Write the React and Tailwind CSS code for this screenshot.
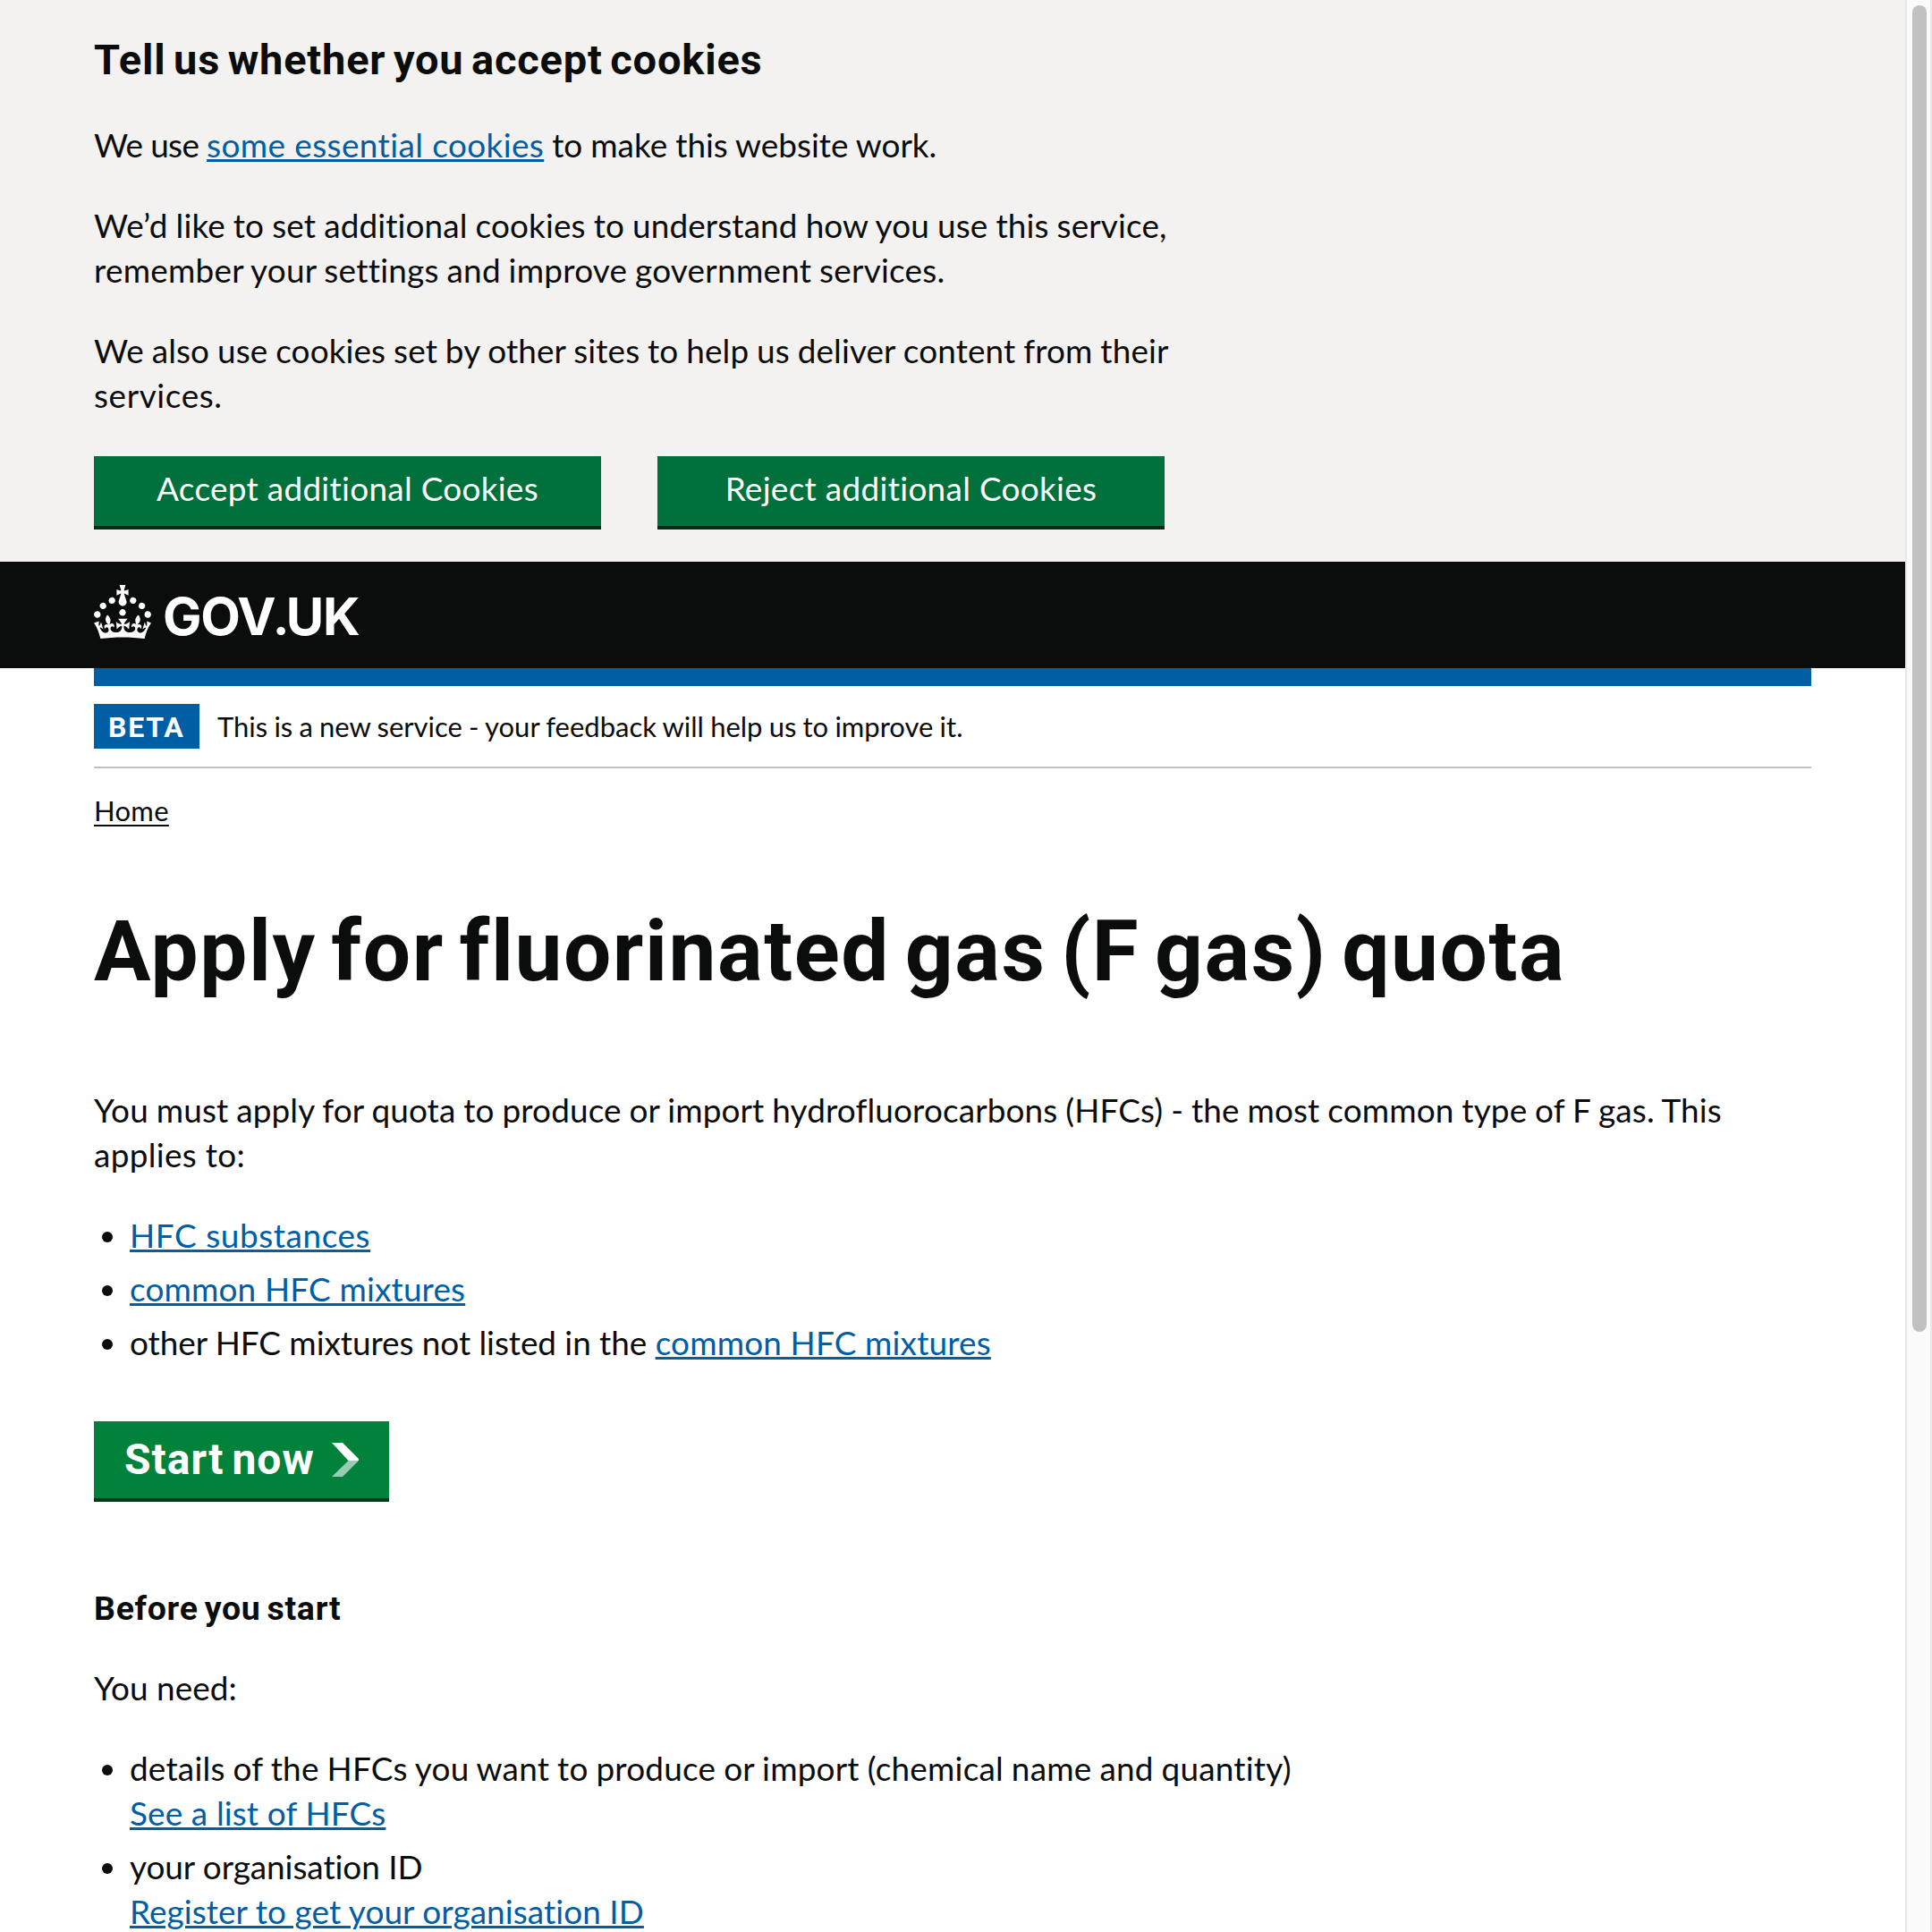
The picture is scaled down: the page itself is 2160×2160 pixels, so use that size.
import React from "react";

const linkClass =
  "text-[#005ea5] underline decoration-[3px] underline-offset-[2px]";

function Crown() {
  return (
    <svg className="h-[60px] w-16 shrink-0" viewBox="0 0 32 30" fill="currentColor" aria-hidden="true">
      <path
        fillRule="evenodd"
        clipRule="evenodd"
        d="M22.6 10.4c-1 .4-2-.1-2.4-1-.4-.9.1-2 1-2.4.9-.4 2 .1 2.4 1s-.1 2-1 2.4m-5.9 6.7c-.9.4-2-.1-2.4-1-.4-.9.1-2 1-2.4.9-.4 2 .1 2.4 1s-.1 2-1 2.4m10.8-3.7c-1 .4-2-.1-2.4-1-.4-.9.1-2 1-2.4.9-.4 2 .1 2.4 1s0 2-1 2.4m3.3 4.8c-1 .4-2-.1-2.4-1-.4-.9.1-2 1-2.4.9-.4 2 .1 2.4 1s-.1 2-1 2.4M17 4.7l2.3 1.2V2.5l-2.3.7-.2-.2.9-3h-3.4l.9 3-.2.2c-.1.1-2.3-.7-2.3-.7v3.4L15 4.7c.1.1.1.2.2.2l-1.3 4c-.1.2-.1.4-.1.6 0 1.1.8 2 1.9 2.2h.7c1-.2 1.9-1.1 1.9-2.1 0-.2 0-.4-.1-.6l-1.3-4c-.1-.2 0-.2.1-.3m-7.6 5.7c.9.4 2-.1 2.4-1 .4-.9-.1-2-1-2.4-.9-.4-2 .1-2.4 1s0 2 1 2.4m-5 3c.9.4 2-.1 2.4-1 .4-.9-.1-2-1-2.4-.9-.4-2 .1-2.4 1s.1 2 1 2.4m-3.2 4.8c.9.4 2-.1 2.4-1 .4-.9-.1-2-1-2.4-.9-.4-2 .1-2.4 1s0 2 1 2.4m14.8 11c4.4 0 8.6.3 12.3.8 1.1-4.5 2.4-7 3.7-8.8l-2.5-.9c.2 1.3.3 1.9 0 2.7-.4-.4-.8-1.1-1.1-2.3l-1.2 4c.7-.5 1.3-.8 2-.9-1.1 2.5-2.6 3.1-3.5 3-1.1-.2-1.7-1.2-1.5-2.1.3-1.2 1.5-1.5 2.1-.1 1.1-2.3-.8-3-2-2.3 1.9-1.9 2.1-3.5.6-5.6-2.1 1.6-2.1 3.2-1.2 5.5-1.2-1.4-3.2-.6-2.5 1.6.9-1.4 2.1-.5 1.9.8-.2 1.1-1.7 2.1-3.5 1.9-2.7-.2-2.9-2.1-2.9-3.6.7-.1 1.9.5 2.9 1.9l.4-4.3c-1.1 1.1-2.1 1.4-3.2 1.4.4-1.2 2.1-3 2.1-3h-5.4s1.7 1.9 2.1 3c-1.1 0-2.1-.2-3.2-1.4l.4 4.3c1-1.4 2.2-2 2.9-1.9-.1 1.5-.2 3.4-2.9 3.6-1.9.2-3.4-.8-3.5-1.9-.2-1.3 1-2.2 1.9-.8.7-2.3-1.2-3-2.5-1.6.9-2.2.9-3.9-1.2-5.5-1.5 2-1.3 3.7.6 5.6-1.2-.7-3.1 0-2 2.3.6-1.4 1.8-1.1 2.1.1.2.9-.3 1.9-1.5 2.1-.9.2-2.4-.5-3.5-3 .6 0 1.2.3 2 .9l-1.2-4c-.3 1.1-.7 1.9-1.1 2.3-.3-.8-.2-1.4 0-2.7l-2.9.9C1.3 23 2.6 25.5 3.7 30c3.7-.5 7.9-.8 12.3-.8"
      />
    </svg>
  );
}

function Item({ children }) {
  return (
    <li className="flex">
      <span className="mt-[21px] mr-[19px] ml-[9px] size-3 shrink-0 rounded-full bg-[#0b0c0c]" />
      <div>{children}</div>
    </li>
  );
}

function CookieBanner() {
  return (
    <section className="h-[628px] bg-[#f3f2f1] px-[105px] pt-[37px]">
      <h2 className="font-['Roboto',sans-serif] text-[47px] leading-[60px] font-bold tracking-[0.8px] [word-spacing:-3.9px]">
        Tell us whether you accept cookies
      </h2>
      <p className="mt-10">
        <span className="tracking-[-0.63px]">We use </span>
        <a className={`${linkClass} tracking-[0.41px]`}>some essential cookies</a>
        <span className="tracking-[0.02px] [word-spacing:-0.5px]"> to make this website work.</span>
      </p>
      <p className="mt-10">
        <span className="tracking-[0.12px] [word-spacing:-0.5px]">
          We’d like to set additional cookies to understand how you use this service,
        </span>
        <br />
        <span className="tracking-[0.26px] [word-spacing:-1px]">remember your settings and improve government services.</span>
      </p>
      <p className="mt-10">
        <span className="tracking-[0.12px] [word-spacing:-0.7px]">
          We also use cookies set by other sites to help us deliver content from their
        </span>
        <br />
        <span className="tracking-[0.6px]">services.</span>
      </p>
      <div className="mt-[43px] flex gap-[63px] text-center text-white">
        <button className="h-[82px] w-[567px] border-b-4 border-[#002d18] bg-[#00703c] pb-1.5 tracking-[0.3px]">
          Accept additional Cookies
        </button>
        <button className="h-[82px] w-[567px] border-b-4 border-[#002d18] bg-[#00703c] pb-1.5 tracking-[0.32px]">
          Reject additional Cookies
        </button>
      </div>
    </section>
  );
}

function Scrollbar() {
  return (
    <div className="h-full w-[30px] shrink-0 border-x-2 border-[#e8e8e8] bg-[#fafafa] pt-1.5 pl-1.5">
      <div className="h-[1483px] w-4 rounded-full bg-[#c1c1c1]" />
    </div>
  );
}

export default function App() {
  return (
    <div className="flex h-[2160px] w-[2160px] overflow-hidden bg-white font-['Lato',sans-serif] text-[36.9px] leading-[50px] whitespace-nowrap text-[#0b0c0c] [font-variant-ligatures:none]">
      <div className="h-full flex-1 overflow-hidden">
        <CookieBanner />

        <header className="flex h-[119px] bg-[#0b0c0c] px-[105px] pt-[26px] text-white">
          <Crown />
          <span className="ml-[13px] font-['Inter',sans-serif] text-[58px] leading-[68px] font-bold tracking-[-1.3px]">
            GOV<span className="font-['Lato',sans-serif] font-black">.</span>UK
          </span>
        </header>

        <div className="px-[105px]">
          <div className="h-5 bg-[#005ea5]" />
          <div className="mt-5 flex h-[72px] border-b-2 border-[#bfc1c3] text-[31px]">
            <strong className="h-[50px] w-[118px] bg-[#005ea5] pl-4 font-['Roboto',sans-serif] text-[32px] leading-[52px] font-bold tracking-[1.8px] text-white">
              BETA
            </strong>
            <span className="ml-5 tracking-[-0.01px] [word-spacing:-0.7px]">
              This is a new service - your feedback will help us to improve it.
            </span>
          </div>
          <nav className="mt-[27px] text-[31px] leading-10">
            <a className="tracking-[0.3px] underline decoration-2 underline-offset-[4px]">Home</a>
          </nav>

          <h1 className="mt-[88px] font-['Roboto',sans-serif] text-[94.5px] leading-[100px] font-bold tracking-[1.55px] [word-spacing:-8.3px]">
            Apply for fluorinated gas (F gas) quota
          </h1>

          <p className="mt-[102px]">
            <span className="tracking-[0.13px] [word-spacing:-0.7px]">
              You must apply for quota to produce or import hydrofluorocarbons (HFCs) - the most common type of F gas. This
            </span>
            <br />
            <span className="tracking-[0.34px]">applies to:</span>
          </p>
          <ul className="mt-10 space-y-2.5">
            <Item>
              <a className={`${linkClass} tracking-[0.59px]`}>HFC substances</a>
            </Item>
            <Item>
              <a className={`${linkClass} tracking-[0.16px]`}>common HFC mixtures</a>
            </Item>
            <Item>
              <span className="tracking-[-0.05px]">other HFC mixtures not listed in the </span>
              <a className={`${linkClass} tracking-[0.16px]`}>common HFC mixtures</a>
            </Item>
          </ul>

          <button className="mt-[63px] flex h-[90px] w-[330px] border-b-4 border-[#003618] bg-[#00823b] pl-[34px] font-['Roboto',sans-serif] text-[48px] leading-[86px] font-bold tracking-[1px] text-white [word-spacing:-4px]">
            <span className="w-[232px] text-left">Start now</span>
            <svg className="mt-6 h-[38px] w-[30px]" viewBox="0 0 30 38" aria-hidden="true">
              <path fill="#fff" d="M0 0h12l18 18v2H18.500z" />
              <path fill="#99cdb1" d="M0 38 18.500 20H30L12 38z" />
            </svg>
          </button>

          <h2 className="mt-[94px] font-['Roboto',sans-serif] text-[37.5px] font-bold tracking-[0.7px] [word-spacing:-3px]">
            Before you start
          </h2>
          <p className="mt-[39px] tracking-[0.05px]">You need:</p>
          <ul className="mt-10 space-y-2.5">
            <Item>
              <span className="tracking-[0.21px] [word-spacing:-0.7px]">
                details of the HFCs you want to produce or import (chemical name and quantity)
              </span>
              <br />
              <a className={`${linkClass} tracking-[0.14px]`}>See a list of HFCs</a>
            </Item>
            <Item>
              <span className="tracking-[-0.05px]">your organisation ID</span>
              <br />
              <a className={`${linkClass} tracking-[0.08px]`}>Register to get your organisation ID</a>
            </Item>
          </ul>
        </div>
      </div>
      <Scrollbar />
    </div>
  );
}
